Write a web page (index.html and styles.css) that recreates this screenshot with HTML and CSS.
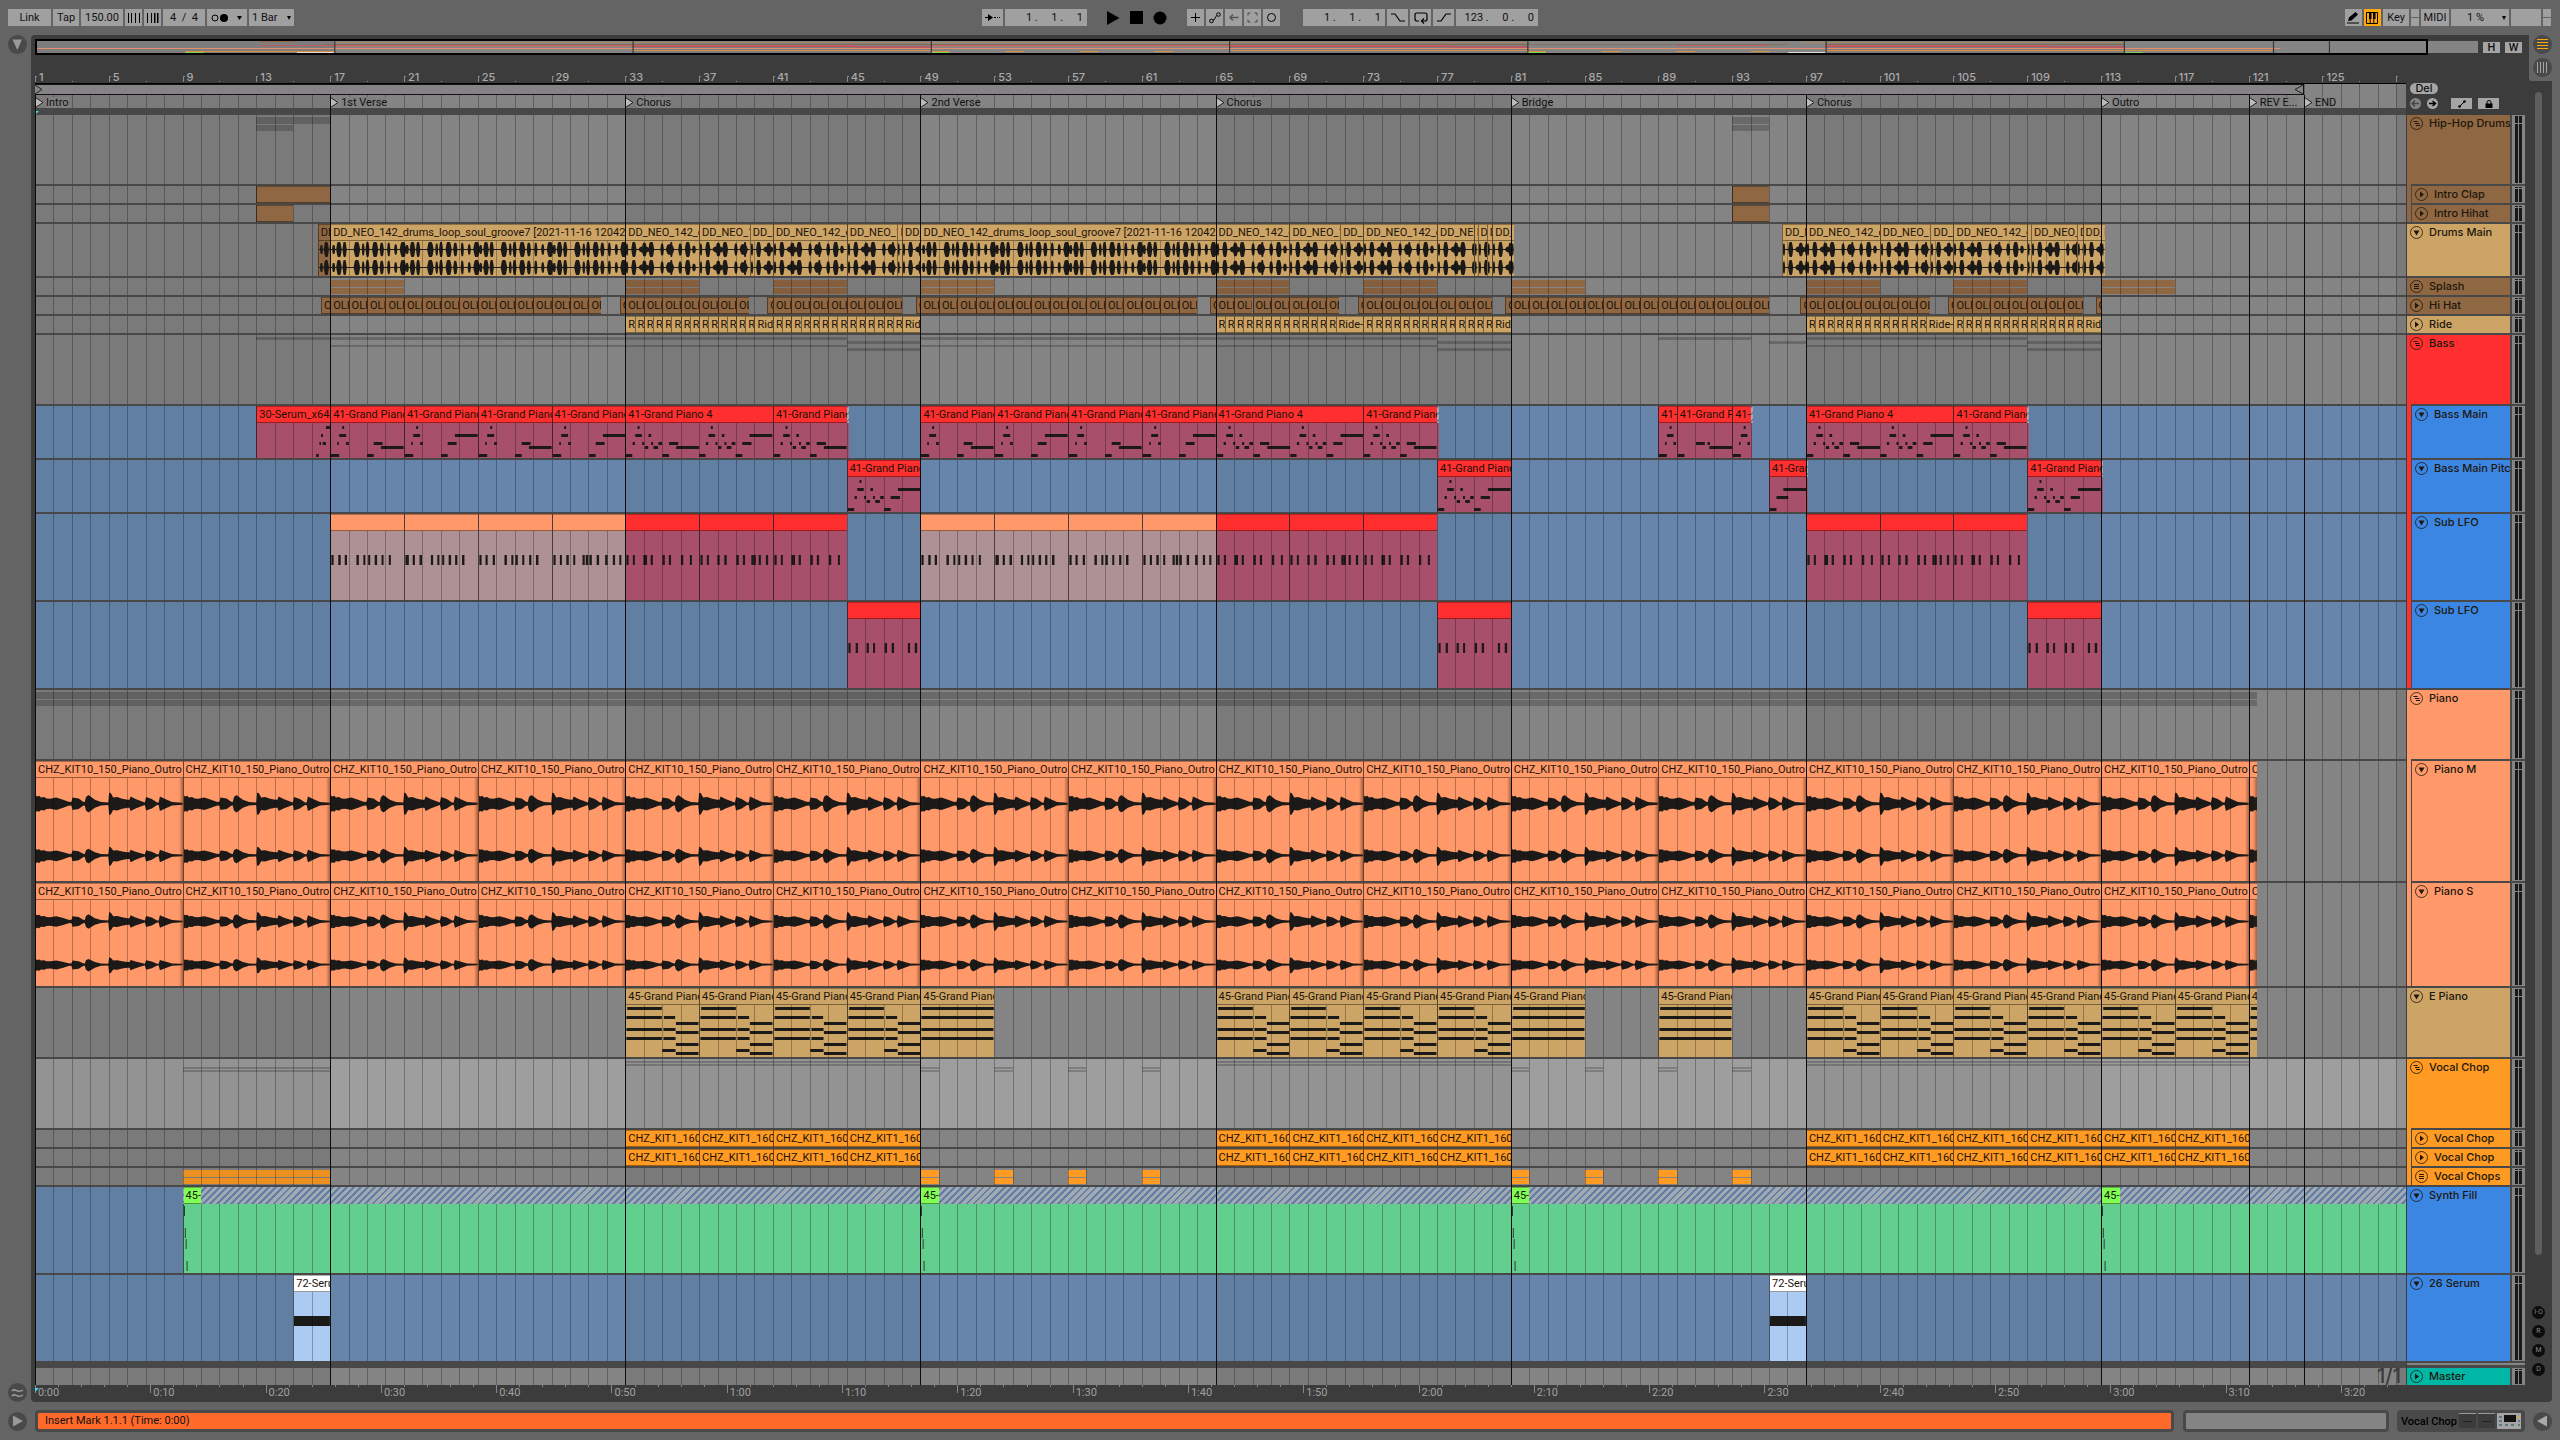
FILE: index.html
```html
<!DOCTYPE html>
<html lang="en">
<head>
<meta charset="utf-8">
<title>Arrangement</title>
<link rel="stylesheet" href="styles.css">
</head>
<body>
<header class="toolbar">
  <div class="group">
    <button class="ctl w-link">Link</button>
    <button class="ctl w-tap">Tap</button>
    <input class="ctl w-tempo" aria-label="Tempo" value="150.00">
    <span class="pair">
      <button class="ctl w-nudge" aria-label="Nudge down"><svg width="12" height="10"><path d="M.5 0v10M3.5 0v10M7.5 0v10M11.5 0v10" stroke="#000"/></svg></button>
      <button class="ctl w-nudge" aria-label="Nudge up"><svg width="12" height="10"><path d="M.5 0v10M4.5 0v10M8 0v10M11 0v10" stroke="#000"/><path d="M7.5 0v10M10.500 0v10" stroke="#000"/></svg></button>
    </span>
    <input class="ctl w-sig" aria-label="Time signature" value="4  /  4">
    <button class="ctl w-metro" aria-label="Metronome"><svg width="32" height="10"><circle cx="4" cy="5" r="3" fill="none" stroke="#000"/><circle cx="13" cy="5" r="4"/><path d="M26 3h5l-2.500 4z"/></svg></button>
    <span class="drop w-quant"><select class="ctl" aria-label="Quantization"><option>1 Bar</option></select></span>
  </div>
  <div class="group transport">
    <button class="ctl w-follow" aria-label="Follow"><svg width="17" height="9"><path d="M1 4h4v1H1zM10 4h2v1h-2zM13 4h1v1h-1zM15 4h1v1h-1z"/><path d="M4 1l5 3.500L4 8z"/></svg></button>
    <input class="ctl w-pos" aria-label="Position" value="1 .     1 .     1">
    <button class="bare play" aria-label="Play"><svg width="13" height="14"><path d="M0 0l12.500 7L0 14z"/></svg></button>
    <button class="bare stop" aria-label="Stop"><svg width="13" height="13"><path d="M0 0h13v13H0z"/></svg></button>
    <button class="bare rec" aria-label="Record"><svg width="14" height="14"><circle cx="7" cy="7" r="6.500"/></svg></button>
    <button class="ctl sq" aria-label="Overdub"><svg width="11" height="11"><path d="M5.500 1v9M1 5.500h9" stroke="#000"/></svg></button>
    <button class="ctl sq" aria-label="Automation arm"><svg width="12" height="12" fill="none" stroke="#000"><circle cx="2.500" cy="9" r="1.800"/><circle cx="9.500" cy="2.500" r="1.800"/><path d="M4 8c3 0 1-3 4-4.500"/></svg></button>
    <button class="ctl sq" aria-label="Re-enable automation"><svg width="11" height="9"><path d="M2 4.500h8.500M5 1.500L2 4.500l3 3" stroke="#555" fill="none" stroke-width="1.500"/></svg></button>
    <button class="ctl sq" aria-label="Capture"><svg width="11" height="11"><path d="M1 3.500V1h2.500M7.500 1H10v2.500M10 7.500V10H7.500M3.500 10H1V7.500" stroke="#444" fill="none"/></svg></button>
    <button class="ctl sq" aria-label="Session record"><svg width="11" height="11"><circle cx="5.500" cy="5.500" r="4" fill="none" stroke="#000"/></svg></button>
    <input class="ctl w-pos2" aria-label="Loop start" value="1 .     1 .     1">
    <button class="ctl w-punch" aria-label="Punch in"><svg width="14" height="10"><path d="M0 1h4l5 7h5" fill="none" stroke="#000" stroke-width="1.200"/></svg></button>
    <button class="ctl w-punch" aria-label="Loop"><svg width="14" height="12" fill="none" stroke="#000" stroke-width="1.200"><path d="M5 9H3Q1 9 1 7V3Q1 1 3 1h8q2 0 2 2v4q0 2-2 2H8M10 6.500L7.500 9l2.500 2.500"/></svg></button>
    <button class="ctl w-punch" aria-label="Punch out"><svg width="14" height="10"><path d="M0 8h4l5-7h5" fill="none" stroke="#000" stroke-width="1.200"/></svg></button>
    <input class="ctl w-pos2" aria-label="Loop length" value="123 .     0 .     0">
  </div>
  <div class="group right">
    <button class="ctl w-punch" aria-label="Draw mode"><svg width="13" height="12"><path d="M1 9l1-3.500L8.500 0 11 2.500 4.500 8.500z"/><path d="M0 11h12" stroke="#000"/></svg></button>
    <button class="ctl w-punch on" aria-label="Computer MIDI keyboard"><svg width="13" height="12"><path d="M.5.500h11v11H.5zM4.200 6v5.500M7.800 6v5.500" fill="none" stroke="#000"/><path d="M3 1h2.500v6H3zM7 1h2.500v6H7z"/></svg></button>
    <button class="ctl w-key">Key</button>
    <span class="split"><i></i><i></i></span>
    <button class="ctl w-midi">MIDI</button>
    <span class="drop w-cpu"><select class="ctl" aria-label="CPU load"><option>1 %</option></select></span>
    <span class="ctl w-disk"></span>
    <span class="split"><i></i><i></i></span>
  </div>
</header>

<main class="workspace">
  <aside class="rail">
    <button class="round" aria-label="Browser"><svg width="11" height="12"><path d="M.5.500h9.500L5.300 11z" fill="#999"/></svg></button>
    <button class="round" aria-label="Groove"><svg width="13" height="12" fill="none" stroke="#999" stroke-width="1.500"><path d="M1 4c3-4 5 3 11-1M1 9c3-4 5 3 11-1"/></svg></button>
  </aside>
  <section class="panel">
    <div class="notch">
      <button class="round" aria-label="Arrangement view"><svg width="11" height="11"><path d="M0 .5h11M0 3.500h11M0 6.500h11M0 9.500h11" stroke="#ffa80a"/></svg></button>
      <button class="round" aria-label="Session view"><svg width="11" height="11"><path d="M.5 0v11M3.500 0v11M6.500 0v11M9.500 0v11" stroke="#a5a5a5"/></svg></button>
    </div>
    <div class="head">
      <div class="overview"><svg id="overview" viewBox="0 0 131 12" preserveAspectRatio="none"></svg><div class="frame"></div></div>
      <button class="mini">H</button>
      <button class="mini">W</button>
    </div>
    <div class="body">
      <div class="timeline">
        <div class="ruler" id="ruler"></div>
        <div class="canvas">
          <div class="grid" id="grid"></div>
          <div class="looprow stripes"><div class="loop"><svg width="8" height="9"><path d="M0 0l7 4.500L0 9" fill="none" stroke="#222"/></svg><svg width="9" height="9"><path d="M9 0L1 4.500 9 9" fill="none" stroke="#222"/></svg></div></div>
          <div class="locrow stripes" id="locators"></div>
          <div class="band"></div>
          <div class="lanes" id="lanes"></div>
          <div class="band"></div>
          <div class="lane stripes master"><span class="ratio">1/1</span></div>
        </div>
        <div class="times" id="times"></div>
      </div>
      <div class="side">
        <div class="sidemain">
          <div class="sidetop">
            <button class="pill">Del</button>
            <div class="siderow">
              <button class="dot dim" aria-label="Previous locator"><svg width="9" height="7"><path d="M1 3.500h7M4 .5L1 3.500l3 3" stroke="#444" fill="none" stroke-width="1.400"/></svg></button>
              <button class="dot" aria-label="Next locator"><svg width="9" height="7"><path d="M1 3.500h6M4.500 1l3 2.500-3 2.500" stroke="#000" fill="none" stroke-width="1.400"/></svg></button>
              <button class="tool" aria-label="Automation mode"><svg width="8" height="8"><path d="M1.500 6.500l5-5" stroke="#000"/><circle cx="1.500" cy="6.500" r="1.300"/><circle cx="6.500" cy="1.500" r="1.300"/></svg></button>
              <button class="tool" aria-label="Lock envelopes"><svg width="8" height="8"><path d="M.5 3.500h7V8h-7z"/><path d="M2 4V2.500a2 2 0 014 0V4" fill="none" stroke="#000"/></svg></button>
            </div>
          </div>
          <div class="heads" id="heads"></div>
          <div class="sideband"></div>
          <div class="hrow" id="master"></div>
        </div>
        <div class="scroller">
          <div class="thumb"></div>
          <button class="tog">I·O</button><button class="tog">R</button><button class="tog">M</button><button class="tog">D</button>
        </div>
      </div>
    </div>
  </section>
</main>

<footer class="status">
  <button class="round" aria-label="Info view"><svg width="11" height="12"><path d="M1 .5v11L11 6z" fill="#999"/></svg></button>
  <div class="box message">Insert Mark 1.1.1 (Time: 0:00)</div>
  <div class="box blank"></div>
  <div class="chain"><span>Vocal Chop</span>
    <svg width="62" height="16"><path d="M0 0h17v15H0zM19 0h17v15H19z" fill="#3c3c3c"/><path d="M0 .5h17M19 .5h17" stroke="#999"/><path d="M4 8.500h9M23 8.500h9" stroke="#222"/><path d="M38 0h24v16H38z" fill="#a5a5a5"/><path d="M45 2h12v7H45z" fill="#111"/><path d="M40 4h3M40 8h3M40 12h3M59 8h2M59 12h2M46 12h3M52 12h3" stroke="#5d7880" stroke-width="2"/><path d="M58 4h3" stroke="#ffa80a"/></svg>
  </div>
  <button class="round" aria-label="Detail view"><svg width="11" height="12"><path d="M10 .5v11L0 6z" fill="#aaa"/></svg></button>
</footer>
<script src="app.js"></script>
</body>
</html>
```
FILE: styles.css
```css
* { box-sizing: border-box; }
body { margin: 0; background: #646464; color: #111; font: 11px/17px Roboto, "Liberation Sans", sans-serif; min-height: 100vh; }
button, input, select { font: inherit; color: inherit; border: 0; border-radius: 0; padding: 0; margin: 0; background: none; appearance: none; }
button { display: flex; align-items: center; justify-content: center; }
svg { display: block; flex: none; }

.toolbar { display: grid; grid-template-columns: 1fr auto 1fr; padding: 9px 9px 9px 8px; }
.group { display: flex; gap: 2px; align-items: center; }
.pair { display: flex; gap: 2px; }
.transport { padding-right: 39px; }
.right { justify-content: flex-end; }
.ctl { display: flex; align-items: center; justify-content: center; height: 17px; background: #a0a0a0; text-align: center; }
.w-link { width: 43px; } .w-tap { width: 26px; } .w-tempo { width: 42px; } .w-nudge { width: 17px; }
.w-sig { width: 42px; white-space: pre; } .w-metro { width: 40px; } .w-quant { width: 45px; }
.w-follow { width: 21px; } .w-pos, .w-pos2 { width: 82px; text-align: right; padding-right: 4px; white-space: pre; }
.bare { height: 17px; }
.play { margin-left: 18px; } .stop { margin-left: 8px; } .rec { margin: 0 18px 0 8px; }
.sq { width: 17px; } .sq + .w-pos2 { margin-left: 21px; }
.w-punch { width: 21px; } .right .w-punch { width: 17px; }
.on { background: #ffa80a; }
.w-key { width: 26px; } .w-midi { width: 28px; } .w-cpu { width: 58px; } .w-disk { width: 30px; }
.split { display: flex; flex-direction: column; gap: 1px; width: 8px; }
.split i { height: 8px; background: #a0a0a0; }
.drop { position: relative; display: block; }
.drop select { width: 100%; padding: 0 12px 0 3px; text-align: left; }
.w-cpu select { text-align: center; }
.drop::after { content: ""; position: absolute; right: 3px; top: 7px; border: 2px solid transparent; border-top: 4px solid #000; border-bottom: 0; pointer-events: none; }

.round { width: 19px; height: 19px; border-radius: 50%; background: #494949; }
.workspace { display: flex; padding-right: 8px; }
.rail { width: 31px; padding-left: 8px; display: flex; flex-direction: column; justify-content: space-between; }
.panel { position: relative; flex: 1; min-width: 0; background: #3c3c3c; border-radius: 4px; padding-left: 4px; }
.notch { position: absolute; top: 0; right: 0; width: 23px; height: 46px; background: #646464; display: flex; flex-direction: column; align-items: flex-end; gap: 4px; border-bottom-left-radius: 2px; }
.head { display: flex; gap: 5px; align-items: center; height: 21px; padding: 3px 30px 0 1px; }
.overview { position: relative; flex: 1; height: 12px; background: #848484; }
.overview svg { width: 100%; height: 100%; }
.frame { position: absolute; left: -1px; top: -2px; width: 98%; height: 16px; border: 2px solid #000; }
.mini { width: 17px; height: 11px; background: #a5a5a5; font-weight: 500; }

.body { display: flex; gap: 1px; }
.timeline { flex: 1; min-width: 0; }
.ruler { position: relative; height: 28px; border-bottom: 1px solid #000; color: #aaa; font-family: Inter, sans-serif; font-weight: 500; }
.ruler span { position: absolute; top: 13px; padding-left: 4px; }
.ruler i { position: absolute; bottom: 1px; width: 2px; height: 6px; border-left: 1px solid #888; border-top: 1px solid #888; }
.ruler i.sub { height: 1px; width: 1px; }
.canvas { position: relative; background: #484848; }
.stripes, .stripes-blue, .stripes-sel { background-color: var(--a); background-image: repeating-linear-gradient(90deg, var(--b) 0 12.448%, var(--a) 12.448% 24.896%); }
.stripes { --a: #848484; --b: #7a7a7a; }
.stripes-blue { --a: #6785aa; --b: #617fa2; }
.stripes-sel { --a: #9e9e9e; --b: #939393; }
.grid { position: absolute; inset: 0; }
.grid i { position: absolute; top: 0; bottom: 0; width: 1px; background: rgba(0, 0, 0, .28); z-index: 2; }
.grid b { position: absolute; top: 11px; bottom: 0; width: 1px; background: #0c0c0c; z-index: 5; }
.looprow { height: 11px; }
.loop { position: relative; z-index: 3; display: flex; justify-content: space-between; width: 95.7%; height: 11px; background: #858385; border: 1px solid #111; border-left: 0; }
.locrow { position: relative; height: 13px; }
.locrow span { position: absolute; z-index: 3; display: flex; gap: 3px; align-items: center; height: 13px; padding-top: 2px; }
.locrow em { font-style: normal; background: #808080; line-height: 11px; }
.band { position: relative; z-index: 3; height: 7px; background: #484848; }
.lanes { display: flex; flex-direction: column; gap: 2px; }
.lane { position: relative; overflow: visible; }
.lane::after { content: ""; position: absolute; left: 0; right: 0; top: 100%; height: 2px; background: #484848; z-index: 3; }
.master { height: 17px; } .master::after { display: none; }
.ratio { position: absolute; right: 5px; top: 0; z-index: 3; font-family: Inter, sans-serif; font-size: 20px; font-weight: 500; color: #3a3a3a; }
.clip { position: absolute; top: 0; bottom: 0; overflow: hidden; display: flex; flex-direction: column; background: var(--body); border-left: 1px solid rgba(0, 0, 0, .42); }
.name { position: relative; z-index: 3; flex: none; height: 17px; background: var(--head); border-top: 1px solid rgba(0, 0, 0, .3); border-bottom: 1px solid rgba(0, 0, 0, .4); padding-left: 2px; white-space: pre; overflow: hidden; line-height: 16px; color: #1c1208; }
.clip svg { flex: 1; width: 100%; min-height: 0; }
.fade::after { content: ""; position: absolute; right: 0; top: 17px; bottom: 0; width: 4px; background: linear-gradient(90deg, transparent, rgba(70, 30, 10, .45)); }
.strip { position: absolute; }
.hatch { position: absolute; top: 0; right: 0; height: 17px; z-index: 3; background: repeating-linear-gradient(135deg, #5f7fa8 0 2px, #a3a9b0 2px 5px); }
.times { position: relative; height: 17px; color: #a0a0a0; }
.times span { position: absolute; top: 0; padding-left: 2px; line-height: 16px; border-left: 1px solid #888; height: 8px; }
.times i { position: absolute; top: 0; width: 1px; height: 2px; background: #888; }
.cue { position: absolute; left: 0; top: 3px; width: 4px; height: 4px; background: #3fd8f5; clip-path: polygon(0 0, 100% 0, 0 100%); z-index: 6; }

.side { display: flex; width: 145px; }
.sidemain { width: 118px; font-family: Inter, sans-serif; }
.sidetop { height: 59px; padding: 27px 0 0 3px; }
.pill { width: 28px; height: 11px; border-radius: 6px; background: #a5a5a5; font-weight: 500; }
.siderow { display: flex; margin-top: 4px; gap: 6px; }
.dot { width: 11px; height: 11px; border-radius: 50%; background: #a5a5a5; } .dim { background: #858585; }
.tool { width: 21px; height: 11px; background: #a5a5a5; } .dot + .tool { margin-left: 7px; }
.heads { display: flex; flex-direction: column; gap: 2px; background: #484848; }
.hrow { position: relative; display: flex; gap: 2px; background: #484848; }
.hname { flex: 1; min-width: 0; display: flex; align-items: flex-start; justify-content: flex-start; gap: 6px; padding: 2px 0 0 3px; height: 100%; background: var(--c); font-weight: 500; line-height: 13px; white-space: nowrap; overflow: hidden; text-align: left; color: #20160c; }
.nested { padding-left: 5px; }
.nested::before { content: ""; position: absolute; left: 0; top: -2px; bottom: 0; width: 4px; background: var(--g); }
.meter { width: 13px; height: 100%; background: #848484; padding: 1px 3px; display: flex; gap: 1px; }
.meter i { width: 3px; height: 100%; background: linear-gradient(#181818 var(--p), #848484 var(--p) calc(var(--p) + 1px), #181818 calc(var(--p) + 1px)); }
.sideband { height: 7px; background: #484848; border-top: 2px solid #484848; box-shadow: inset 0 2px #848484; }
#master { height: 17px; }
.scroller { flex: 1; display: flex; flex-direction: column; gap: 6px; align-items: center; padding: 36px 0 26px; }
.thumb { flex: 1; width: 7px; border-radius: 4px; background: #5e5e5e; margin-bottom: 45px; }
.tog { width: 13px; height: 13px; border-radius: 50%; background: #0c0c0c; color: #888; font-size: 7px; }

.status { display: flex; align-items: center; padding: 8px 8px; }
.box { height: 22px; border: 3px solid #494949; border-radius: 4px; background: #848484; }
.message { flex: 1; margin-left: 8px; background: #ff6a2b; padding-left: 7px; line-height: 16px; }
.blank { width: 206px; margin: 0 8px 0 9px; }
.chain { width: 128px; height: 22px; border-radius: 4px; background: #494949; display: flex; align-items: center; justify-content: space-between; padding: 0 4px; margin-right: 8px; color: #000; }
.chain span { font-weight: 500; }
```
FILE: app.js
```js
const BARS = 128.53;
const at = b => ((b - 1) / BARS * 100) + '%';
const wide = n => (n / BARS * 100) + '%';
const $ = id => document.getElementById(id);
const range = (a, b, s) => { const r = []; for (let i = a; i < b; i += s) r.push(i); return r; };

const BROWN = '#8f6742', SAND = '#cca466', RED = '#ff2f2f', WINE = '#a84f6c', PEACH = '#ff996a',
      ROSE = '#ad9195', ORANGE = '#ff9a23', BLUE = '#3b86e3', GREEN = '#63cf8f';

/* Ruler, grid, locators */
let h = '', g = '';
for (let b = 1; b <= 129; b += 2) {
  h += (b - 1) % 4 ? `<i class="sub" style="left:${at(b)}"></i>` : `<i style="left:${at(b)}"></i>` + (b < 129 ? `<span style="left:${at(b)}">${b}</span>` : '');
}
$('ruler').innerHTML = h;
for (let b = 2; b <= 129; b++) g += `<i style="left:${at(b)}"></i>`;
const locs = [[1, 'Intro'], [17, '1st Verse'], [33, 'Chorus'], [49, '2nd Verse'], [65, 'Chorus'], [81, 'Bridge'], [97, 'Chorus'], [113, 'Outro'], [121, 'REV E...'], [124, 'END']];
locs.forEach(([b]) => g += `<b style="left:${at(b)}"></b>`);
$('grid').innerHTML = g;
$('locators').innerHTML = locs.map(([b, t]) => `<span style="left:${at(b)}"><svg width="8" height="11"><path d="M.5.500L8 5.500.5 10.500z" fill="#bbb" stroke="#222"/></svg><em>${t}</em></span>`).join('');
document.querySelector('.band').innerHTML = '<div class="cue"></div>';
let t = '<div class="cue"></div>';
for (let s = 0; s <= 204; s += 2) {
  const x = at(1 + s / 1.6);
  t += s % 10 ? `<i style="left:${x}"></i>` : `<span style="left:${x}">${Math.floor(s / 60)}:${String(s % 60).padStart(2, '0')}</span>`;
}
$('times').innerHTML = t;

/* Clip contents */
const svg = (len, height, inner) => `<svg viewBox="0 0 ${len} ${height}" preserveAspectRatio="none" fill="#1c1a18">${inner}</svg>`;
const rects = (list, unit, hh, off = 0) => list.map(([x, w, y]) => `<rect x="${off + x / unit}" y="${y}" width="${w / unit}" height="${hh}"/>`).join('');

const RIFF = [[34, 6, 3], [25, 21, 11], [19, 5, 19], [46, 8, 19], [130, 27, 19], [0, 25, 31], [110, 20, 31]];
const FULL = [[35, 6, 3], [28, 20, 11], [68, 8, 11], [20, 7, 19], [49, 6, 19], [76, 6, 19], [98, 11, 19], [130, 28, 19], [57, 10, 23], [83, 14, 23], [0, 19, 31], [110, 20, 31]];
const LOW = [[152, 69, 23]], HIGH = [[152, 69, 11]];
const bass = (len, ...parts) => svg(len, 35, parts.map((p, i) => rects(p, 55.4, 3, i * 4)).join(''));
const KEYS = [[3, 86, 2], [1, 88, 11], [94, 28, 11], [124, 56, 17], [1, 88, 23], [93, 30, 23], [124, 56, 26], [1, 88, 32], [93, 30, 32], [124, 56, 38], [90, 33, 44], [124, 56, 47]];
const HOLD = [[3, 178, 2], [1, 179, 11], [1, 179, 23], [1, 179, 32]];
const hits = (list, w = 6) => svg(4, 69, rects(list.map(x => [x, w - (x % 3) / 2, 24]), 45, 10));
const HITS = [
  [1, 18, 34, 63, 80, 92, 108, 125, 143], [1, 4, 19, 36, 64, 80, 92, 108, 124, 141],
  [1, 16, 34, 63, 80, 90, 107, 124, 141], [1, 17, 33, 50, 73, 81, 90, 108, 129, 148, 164]];
const RHITS = [[1, 17, 43, 47, 61, 90, 106, 136, 158], [1, 17, 43, 60, 90, 106, 127, 132, 145, 163], [1, 17, 43, 47, 61, 90, 106, 136, 158]];

const ENV = [[0, 25], [3, 22], [8, 24], [12, 19], [20, 20], [26, 16], [35, 15], [50, 19], [65, 13], [80, 6], [87, 5], [90, 19], [105, 16], [116, 6], [120, 5], [123, 20], [129, 26], [145, 12], [160, 5], [178, 4], [180, 33], [184, 32], [190, 19], [200, 20], [212, 15], [225, 12], [230, 12], [233, 22], [245, 14], [258, 8], [268, 4], [271, 20], [285, 14], [298, 4], [302, 4], [305, 22], [318, 14], [335, 5], [361, 3]];
function piano(len) {
  const k = .325, ch = (c, u, d) => 'M' + ENV.map(([x, a]) => `${x / 45.1} ${c - a * k * u}`).join('L') + 'L' + ENV.slice().reverse().map(([x, a]) => `${x / 45.1} ${c + a * k * d}`).join('L') + 'Z';
  return svg(len, 100, `<path d="${ch(25, 1, 1)}${ch(75, .75, .95)}"/>`);
}
const BEAT = [[8, 10, .6], [24, 17, 1], [41, 13, 1], [78, 20, 1], [97, 9, .8], [110, 12, 1], [133, 19, 1], [153, 13, .9], [174, 10, .9], [195, 10, .7], [217, 20, 1]];
const BEAT2 = [[3, 8, .8], [24, 16, 1], [55, 36, .4], [56, 16, .9], [77, 18, 1], [110, 11, .8], [134, 26, .7], [138, 10, 1], [165, 12, .8], [188, 18, 1], [207, 12, .5]];
function drums(len, pat) {
  let d = '';
  for (let o = 0; o < len; o += 4) for (const [x, w, a] of pat) for (const c of [8.5, 26.5]) {
    const X = v => (o + v / 55.4).toFixed(3), A = a * 7.6;
    d += `M${X(x - w / 2)} ${c}L${X(x - w / 3)} ${c - A * .8}L${X(x - w / 5)} ${c - A}L${X(x + w / 5)} ${c - A}L${X(x + w / 3)} ${c - A * .7}L${X(x + w / 2)} ${c}L${X(x + w / 3)} ${c + A * .8}L${X(x + w / 5)} ${c + A}L${X(x - w / 5)} ${c + A}L${X(x - w / 3)} ${c + A * .7}Z`;
  }
  return svg(len, 35, `<path d="${d}M0 8h${len}v1H0zM0 26h${len}v1H0z"/>`);
}

const clip = (a, b, name, head, body, inner = '', cls = '') =>
  `<div class="clip ${cls}" style="left:${at(a)};width:${wide(b - a)};--head:${head};--body:${body}"><div class="name">${name}</div>${inner}</div>`;
const strip = (a, b, y, hh, c = 'rgba(0,0,0,.2)') => `<div class="strip" style="left:${at(a)};width:${wide(b - a)};top:${y}px;height:${hh}px;background:${c}"></div>`;
const dark = b => Math.floor((b - 1) / 16) % 2 === 0;

/* Lanes */
const solid = list => list.map(([a, b]) => clip(a, b, '', BROWN, BROWN)).join('');

const DRUMNAME = 'DD_NEO_142_drums_loop_soul_groove7 [2021-11-16 12042';
const drumCuts = [[17, 33], [33, 37, 39.75, 41, 45, 47.75, 48, 49], [49, 65], [65, 69, 71.75, 73, 77, 79, 79.2, 79.7, 80, 81, 81.2], [95.7, 97, 101, 103.75, 105, 109, 109.2, 111.7, 112, 113, 113.2]];
let drumLane = clip(16.33, 17, DRUMNAME, BROWN, BROWN, drums(.67, BEAT));
drumCuts.forEach(c => c.slice(0, -1).forEach((a, i) => { const b = c[i + 1]; drumLane += clip(a, b, DRUMNAME, SAND, SAND, drums(b - a, b - a > 8 ? BEAT : BEAT2)); }));

const splashLane = [17, 33, 41, 49, 65, 73, 81, 97, 105, 113].map(b => { const c = dark(b) ? '#855f3d' : BROWN; return strip(b, b + 4, 2, 7, c) + strip(b, b + 4, 10, 6, c); }).join('');

let hatLane = '';
[[16.5, 31.7], [32.7, 39.7], [40.7, 48], [48.75, 64], [64.7, 71.7], [72.7, 80], [80.7, 95], [96.7, 103.7], [104.7, 112], [112.7, 113]].forEach(([a, z]) => {
  while (a < z) { const b = Math.min(Math.floor(a) + 1, z); hatLane += clip(a, b, 'OLI', BROWN, BROWN); a = b; }
});
let rideLane = '';
[[33, 40], [41, 48], [65, 71.5], [73, 80], [97, 103.5], [105, 112]].forEach(([a, z]) => {
  range(a, z, .5).forEach(b => rideLane += clip(b, b + .5, 'R', SAND, SAND));
  rideLane += clip(z, Math.ceil(z + .9), 'Ride-', SAND, SAND);
});

const bassGroup = [[13, 45], [49, 77], [89, 94], [97, 109]].map(([a, b]) => strip(a, b, 2, 3)).join('') +
  [[17, 45], [49, 77], [97, 109]].map(([a, b]) => strip(a, b, 10, 2)).join('') +
  [[45, 49], [77, 81], [109, 113]].map(([a, b]) => strip(a, b, 6, 3) + strip(a, b, 13, 3)).join('') + strip(95, 97, 6, 3);

const GP = '41-Grand Piano 4';
const overhang = b => `<div class="hatch" style="left:${at(b)};right:auto;width:2px"></div>` + strip(b, b + .1, 17, 35, WINE);
let bassLane = clip(13, 17, '30-Serum_x64', RED, WINE, bass(4, [[210, 12, 3], [195, 6, 11], [190, 5, 19], [200, 10, 19], [180, 8, 31]]));
[17, 49].forEach(s => range(s, s + 16, 4).forEach((b, i) => bassLane += clip(b, b + 4, GP, RED, WINE, bass(4, RIFF.concat(i % 2 ? HIGH : LOW)))));
[33, 65, 97].forEach(b => bassLane += clip(b, b + 8, GP, RED, WINE, bass(8, FULL.concat(LOW), FULL.concat(HIGH))) + clip(b + 8, b + 12, GP, RED, WINE, bass(4, FULL.concat(LOW))) + overhang(b + 12));
bassLane += clip(89, 90, GP, RED, WINE, bass(1, RIFF)) + clip(90, 93, GP, RED, WINE, bass(3, [[55, 27, 19], [96, 70, 23], [0, 20, 31], [90, 8, 19]])) + clip(93, 94, GP, RED, WINE, bass(1, RIFF)) + overhang(94);

let pitchLane = [45, 77, 109].map(b => clip(b, b + 4, GP, RED, WINE, bass(4, FULL.concat(HIGH)))).join('') +
  clip(95, 97, GP, RED, WINE, bass(2, [[0, 20, 31], [20, 36, 19], [41, 70, 11]])) + overhang(97) + overhang(113);

let subLane = '';
[17, 49].forEach(s => range(s, s + 16, 4).forEach((b, i) => subLane += clip(b, b + 4, '', PEACH, ROSE, hits(HITS[i]))));
[33, 65, 97].forEach(s => range(s, s + 12, 4).forEach((b, i) => subLane += clip(b, b + 4, '', RED, WINE, hits(RHITS[i]))));
const subLane2 = [45, 77, 109].map(b => clip(b, b + 4, '', RED, WINE, hits([1, 19, 46, 62, 91, 108, 148, 165]))).join('');

const pianoLane = range(1, 121, 8).map(b => clip(b, b + 8, 'CHZ_KIT10_150_Piano_Outro', PEACH, PEACH, piano(8), 'fade')).join('') +
  clip(121, 121.43, 'C', PEACH, PEACH, piano(.43), 'fade');

const EP = '45-Grand Piano';
let keysLane = [33, 37, 41, 45, 65, 69, 73, 77, 97, 101, 105, 109, 113, 117].map(b => clip(b, b + 4, EP, SAND, SAND, svg(4, 52, rects(KEYS, 45.2, 3)))).join('') +
  [49, 81, 89].map(b => clip(b, b + 4, EP, SAND, SAND, svg(4, 52, rects(HOLD, 45.2, 3)))).join('') +
  clip(121, 121.43, '4', SAND, SAND, svg(.43, 52, rects(HOLD, 45.2, 3)));

const pips = [[9, 17], [49, 50], [53, 54], [57, 58], [61, 62], [81, 82], [85, 86], [89, 90], [93, 94]];
const vocalGroup = [[33, 49], [65, 81], [97, 121]].map(([a, b]) => strip(a, b, 2, 2) + strip(a, b, 5, 2)).join('') + pips.map(([a, b]) => strip(a, b, 8, 2) + strip(a, b, 11, 2)).join('');
const vocalLane = [[33, 49], [65, 81], [97, 121]].map(([a, z]) => range(a, z, 4).map(b => clip(b, b + 4, 'CHZ_KIT1_160', ORANGE, ORANGE)).join('')).join('');
const chopsLane = pips.map(([a, b]) => { const c = dark(a) ? '#ec9022' : ORANGE; return strip(a, b, 2, 7, c) + strip(a, b, 10, 6, c); }).join('');

const stab = svg(1, 69, rects([[0, 2.5, 2], [2.7, 2.5, 24], [5.5, 2.5, 35], [8.5, 2.5, 57]], 55.4, 10));
const fillLane = `<div class="hatch" style="left:${at(9)}"></div>` + strip(9, 129.43, 17, 69, GREEN).replace(/width:[^;]+/, 'right:0') +
  [9, 49, 81, 113].map(b => clip(b, b + 1, '45-', '#7fff54', 'transparent', stab)).join('');
const serumLane = [15, 95].map(b => clip(b, b + 2, '72-Seru', '#fff', '#accbf3', svg(2, 69, '<rect y="24" width="2" height="10"/>'))).join('');

const tracks = [
  ['Hip-Hop Drums', 69, BROWN, 'group', '', '', strip(13, 17, 2, 7) + strip(13, 15, 10, 6) + strip(93, 95, 2, 7) + strip(93, 95, 10, 6)],
  ['Intro Clap', 17, BROWN, 'play', BROWN, '', solid([[13, 17], [93, 95]])],
  ['Intro Hihat', 17, BROWN, 'play', BROWN, '', solid([[13, 15], [93, 95]])],
  ['Drums Main', 52, SAND, 'open', '', '', drumLane],
  ['Splash', 17, BROWN, 'bars', '', '', splashLane],
  ['Hi Hat', 17, BROWN, 'play', '', '', hatLane],
  ['Ride', 17, SAND, 'play', '', '', rideLane],
  ['Bass', 69, RED, 'group', '', '', bassGroup],
  ['Bass Main', 52, BLUE, 'open', RED, '-blue', bassLane],
  ['Bass Main Pitc', 52, BLUE, 'open', RED, '-blue', pitchLane],
  ['Sub LFO', 86, BLUE, 'open', RED, '-blue', subLane],
  ['Sub LFO', 86, BLUE, 'open', RED, '-blue', subLane2],
  ['Piano', 69, PEACH, 'group', '', '', strip(1, 121.43, 2, 7) + strip(1, 121.43, 10, 6)],
  ['Piano M', 120, PEACH, 'open', PEACH, '', pianoLane],
  ['Piano S', 103, PEACH, 'open', PEACH, '', pianoLane],
  ['E Piano', 69, SAND, 'open', '', '', keysLane],
  ['Vocal Chop', 69, ORANGE, 'group', '', '-sel', vocalGroup],
  ['Vocal Chop', 17, ORANGE, 'play', ORANGE, '', vocalLane],
  ['Vocal Chop', 17, ORANGE, 'play', ORANGE, '', vocalLane],
  ['Vocal Chops', 17, ORANGE, 'bars', ORANGE, '', chopsLane],
  ['Synth Fill', 86, BLUE, 'open', '', '-blue', fillLane],
  ['26 Serum', 86, BLUE, 'open', '', '-blue', serumLane]
];
const GLYPH = {
  group: '<path d="M3.500 4.500h4M5 6.500h4.500M6 8.500h4" stroke="#20160c"/>',
  bars: '<path d="M4 4.500h5M4 6.500h5M4 8.500h5" stroke="#20160c"/>',
  play: '<path d="M5 3.500v6l4-3z" fill="#20160c"/>',
  open: '<path d="M3.500 4.500h6l-3 5z" fill="#20160c"/>'
};
const header = (name, px, color, kind, parent) =>
  `<button class="hname" style="--c:${color}"><svg width="13" height="13"><circle cx="6.500" cy="6.500" r="6" fill="none" stroke="#20160c" stroke-opacity=".8"/>${GLYPH[kind]}</svg>${name}</button><div class="meter" style="--p:${px > 20 ? 7 : 1}px"><i></i><i></i></div>`;
$('lanes').innerHTML = tracks.map(([, px, , , , kind, inner]) => `<div class="lane stripes${kind}" style="height:${px}px">${inner}</div>`).join('');
$('heads').innerHTML = tracks.map(([name, px, c, k, parent]) => `<div class="hrow${parent ? ' nested' : ''}" style="height:${px}px;--g:${parent}">${header(name, px, c, k)}</div>`).join('');
$('master').innerHTML = header('Master', 17, '#00b6a5', 'play');

/* Overview */
const o = (a, b, y, hh, c) => `<rect x="${a - 1}" y="${y}" width="${b - a}" height="${hh}" fill="${c}"/>`;
let ov = '';
[1, 33, 65, 97].forEach(b => ov += o(b, b + 16, 0, 12, '#7d7d7d'));
ov += o(13, 15, 0, 1, '#8f6742') + o(17, 81, 1, 1, '#a8895f') + o(95.7, 113, 1, 1, '#a8895f') + o(16.5, 95, 3, 1, '#84705c') + o(97, 113, 3, 1, '#84705c') + o(13, 45, 4, 1, '#bd5d62') + o(49, 77, 4, 1, '#bd5d62') + o(97, 109, 4, 1, '#bd5d62') + o(89, 94, 4, 1, '#bd5d62');
[33, 65, 97].forEach(b => ov += o(b, b + 12, 5, 1, '#c65060') + o(b + 12, b + 16, 5, 2, '#b85a66') + o(b, b + 16, 9, 1, '#c9934f'));
ov += o(17, 33, 5, 1, '#b08078') + o(49, 65, 5, 1, '#b08078') + o(1, 121.4, 7, 1, '#e58f6c') + o(97, 121, 9, 1, '#d98f3c') + o(9, 17, 10, 1, '#d98f3c');
pips.slice(1).forEach(([a, b]) => ov += o(a, b, 10, 1, '#d98f3c'));
[9, 49, 81, 113].forEach(b => ov += o(b, b + 1, 11, 1, '#79d35c'));
ov += o(15, 17, 11, 1, '#ddd') + o(95, 97, 11, 1, '#ddd');
[17, 33, 49, 65, 81, 97, 113, 121, 124].forEach(b => ov += o(b, b + .06, 0, 12, '#333'));
$('overview').innerHTML = ov;
```
